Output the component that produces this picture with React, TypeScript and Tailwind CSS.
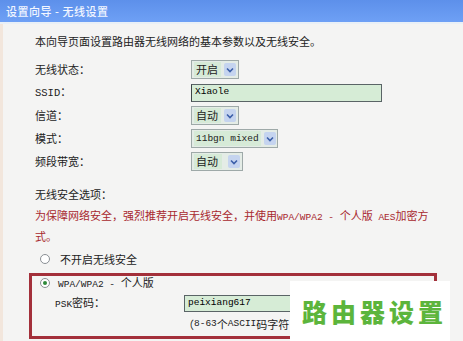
import React from 'react';

const cjk = '[font-family:"Noto_Sans_CJK_SC",sans-serif]';

// Latin bits in the old router UI use a narrow half-width serif mono
function M({ children }: { children: React.ReactNode }) {
  return <span className="[font-family:'Liberation_Mono',monospace] text-[9.5px]">{children}</span>;
}

function Arrow() {
  return (
    <div className="w-[12px] h-[13px] bg-[#c5d4ef] rounded-[2px] flex items-center justify-center shrink-0">
      <svg width="8" height="6" viewBox="0 0 8 6">
        <path d="M1 1.5 L4 4.5 L7 1.5" fill="none" stroke="#3b5fa8" strokeWidth="1.6" />
      </svg>
    </div>
  );
}

function Select({ value, width, mono = false }: { value: string; width: string; mono?: boolean }) {
  return (
    <div className={`flex items-center h-[19px] ${width} border border-[#9ea9a8] bg-[#e4ece6] px-[2px] gap-[3px]`}>
      <div className="flex-1 h-[15px] bg-[#d6ead7] flex items-center px-[2px] text-[11px] leading-none text-[#222] whitespace-nowrap">
        {mono ? <M>{value}</M> : value}
      </div>
      <Arrow />
    </div>
  );
}

function Row({ label, children }: { label: React.ReactNode; children: React.ReactNode }) {
  return (
    <div className="flex items-center h-[23px]">
      <div className="w-[156px] text-[11px] text-[#222]">{label}</div>
      {children}
    </div>
  );
}

function Radio({ checked = false }: { checked?: boolean }) {
  return (
    <span className="w-[10px] h-[10px] rounded-full border border-[#8a8f94] bg-white flex items-center justify-center shrink-0">
      {checked && <span className="w-[4px] h-[4px] rounded-full bg-[#2f8a3a]" />}
    </span>
  );
}

export default function App() {
  return (
    <div className={`relative w-[463px] h-[341px] overflow-hidden bg-[#f4f4f3] ${cjk}`}>
      {/* Header */}
      <div className="h-[22px] bg-gradient-to-b from-[#5d90ea] to-[#6ea0f5] flex items-center pl-[6px]">
        <span className="text-[11px] text-[#f2f6ff] font-medium tracking-[0.5px]">设置向导 - 无线设置</span>
      </div>
      <div className="h-[2px] bg-[#e9f0f7]" />

      {/* Body */}
      <div className="border-l-[3px] border-[#f2e6dc] pl-[32px] h-[317px]">
        <div className="pt-[8px] h-[27px] flex items-center text-[11px] text-[#222]">
          本向导页面设置路由器无线网络的基本参数以及无线安全。
        </div>

        <div className="mt-[7px]">
          <Row label="无线状态：">
            <Select value="开启" width="w-[48px]" />
          </Row>
          <Row label={<><span className="[font-family:'Liberation_Mono',monospace] text-[10.5px]">SSID</span>：</>}>
            <div className="w-[191px] h-[18px] border border-[#5a6466] border-l-[#3f4648] bg-[#d6ecd6] flex items-center px-[3px]">
              <M>Xiaole</M>
            </div>
          </Row>
          <Row label="信道：">
            <Select value="自动" width="w-[48px]" />
          </Row>
          <Row label="模式：">
            <Select value="11bgn mixed" width="w-[87px]" mono />
          </Row>
          <Row label="频段带宽：">
            <div className="flex items-center h-[19px] w-[52px] border border-[#9ea9a8] bg-[#e4ece6] px-[2px] gap-[6px]">
              <div className="w-[28px] h-[15px] bg-[#d6ead7] flex items-center px-[2px] text-[11px] leading-none text-[#222]">自动</div>
              <Arrow />
            </div>
          </Row>
        </div>

        <div className="mt-[11px] h-[20px] flex items-center text-[11px] text-[#222]">无线安全选项：</div>
        <div className="mt-[2px] text-[11px] leading-[19px] text-[#a8282e]">
          <div className="whitespace-nowrap">
            为保障网络安全，强烈推荐开启无线安全，并使用<M>WPA/WPA2 - </M>个人版<M> AES</M>加密方
          </div>
          <div>式。</div>
        </div>

        <div className="mt-[3px] h-[20px] flex items-center gap-[10px] pl-[5px] text-[11px] text-[#222]">
          <Radio />
          <span>不开启无线安全</span>
        </div>

        <div className="mt-[4px] -ml-[6px] w-[408px] border-[3px] border-[#a3303a] pb-[2px]">
          <div className="h-[14px] flex items-center gap-[8px] pl-[8px] text-[11px] text-[#222]">
            <Radio checked />
            <span><M>WPA/WPA2 - </M>个人版</span>
          </div>
          <div className="mt-[3px] h-[20px] flex items-center pl-[23px]">
            <div className="w-[129px] text-[11px] text-[#222]"><M>PSK</M>密码：</div>
            <div className="w-[200px] h-[17px] border border-[#5a6466] bg-[#d6ecd6] flex items-center px-[3px]">
              <M>peixiang617</M>
            </div>
          </div>
          <div className="mt-[1px] h-[20px] flex items-center pl-[151px] text-[11px] text-[#222]">
            （<M>8-63</M>个<M>ASCII</M>码字符
          </div>
        </div>
      </div>

      {/* watermark */}
      <div className="absolute left-[290px] top-[281px] w-[160px] h-[60px] bg-white flex items-center pl-[12px]">
        <span className="text-[25px] font-black text-[#5cb53c] tracking-[4px] leading-none whitespace-nowrap">路由器设置</span>
      </div>
    </div>
  );
}
